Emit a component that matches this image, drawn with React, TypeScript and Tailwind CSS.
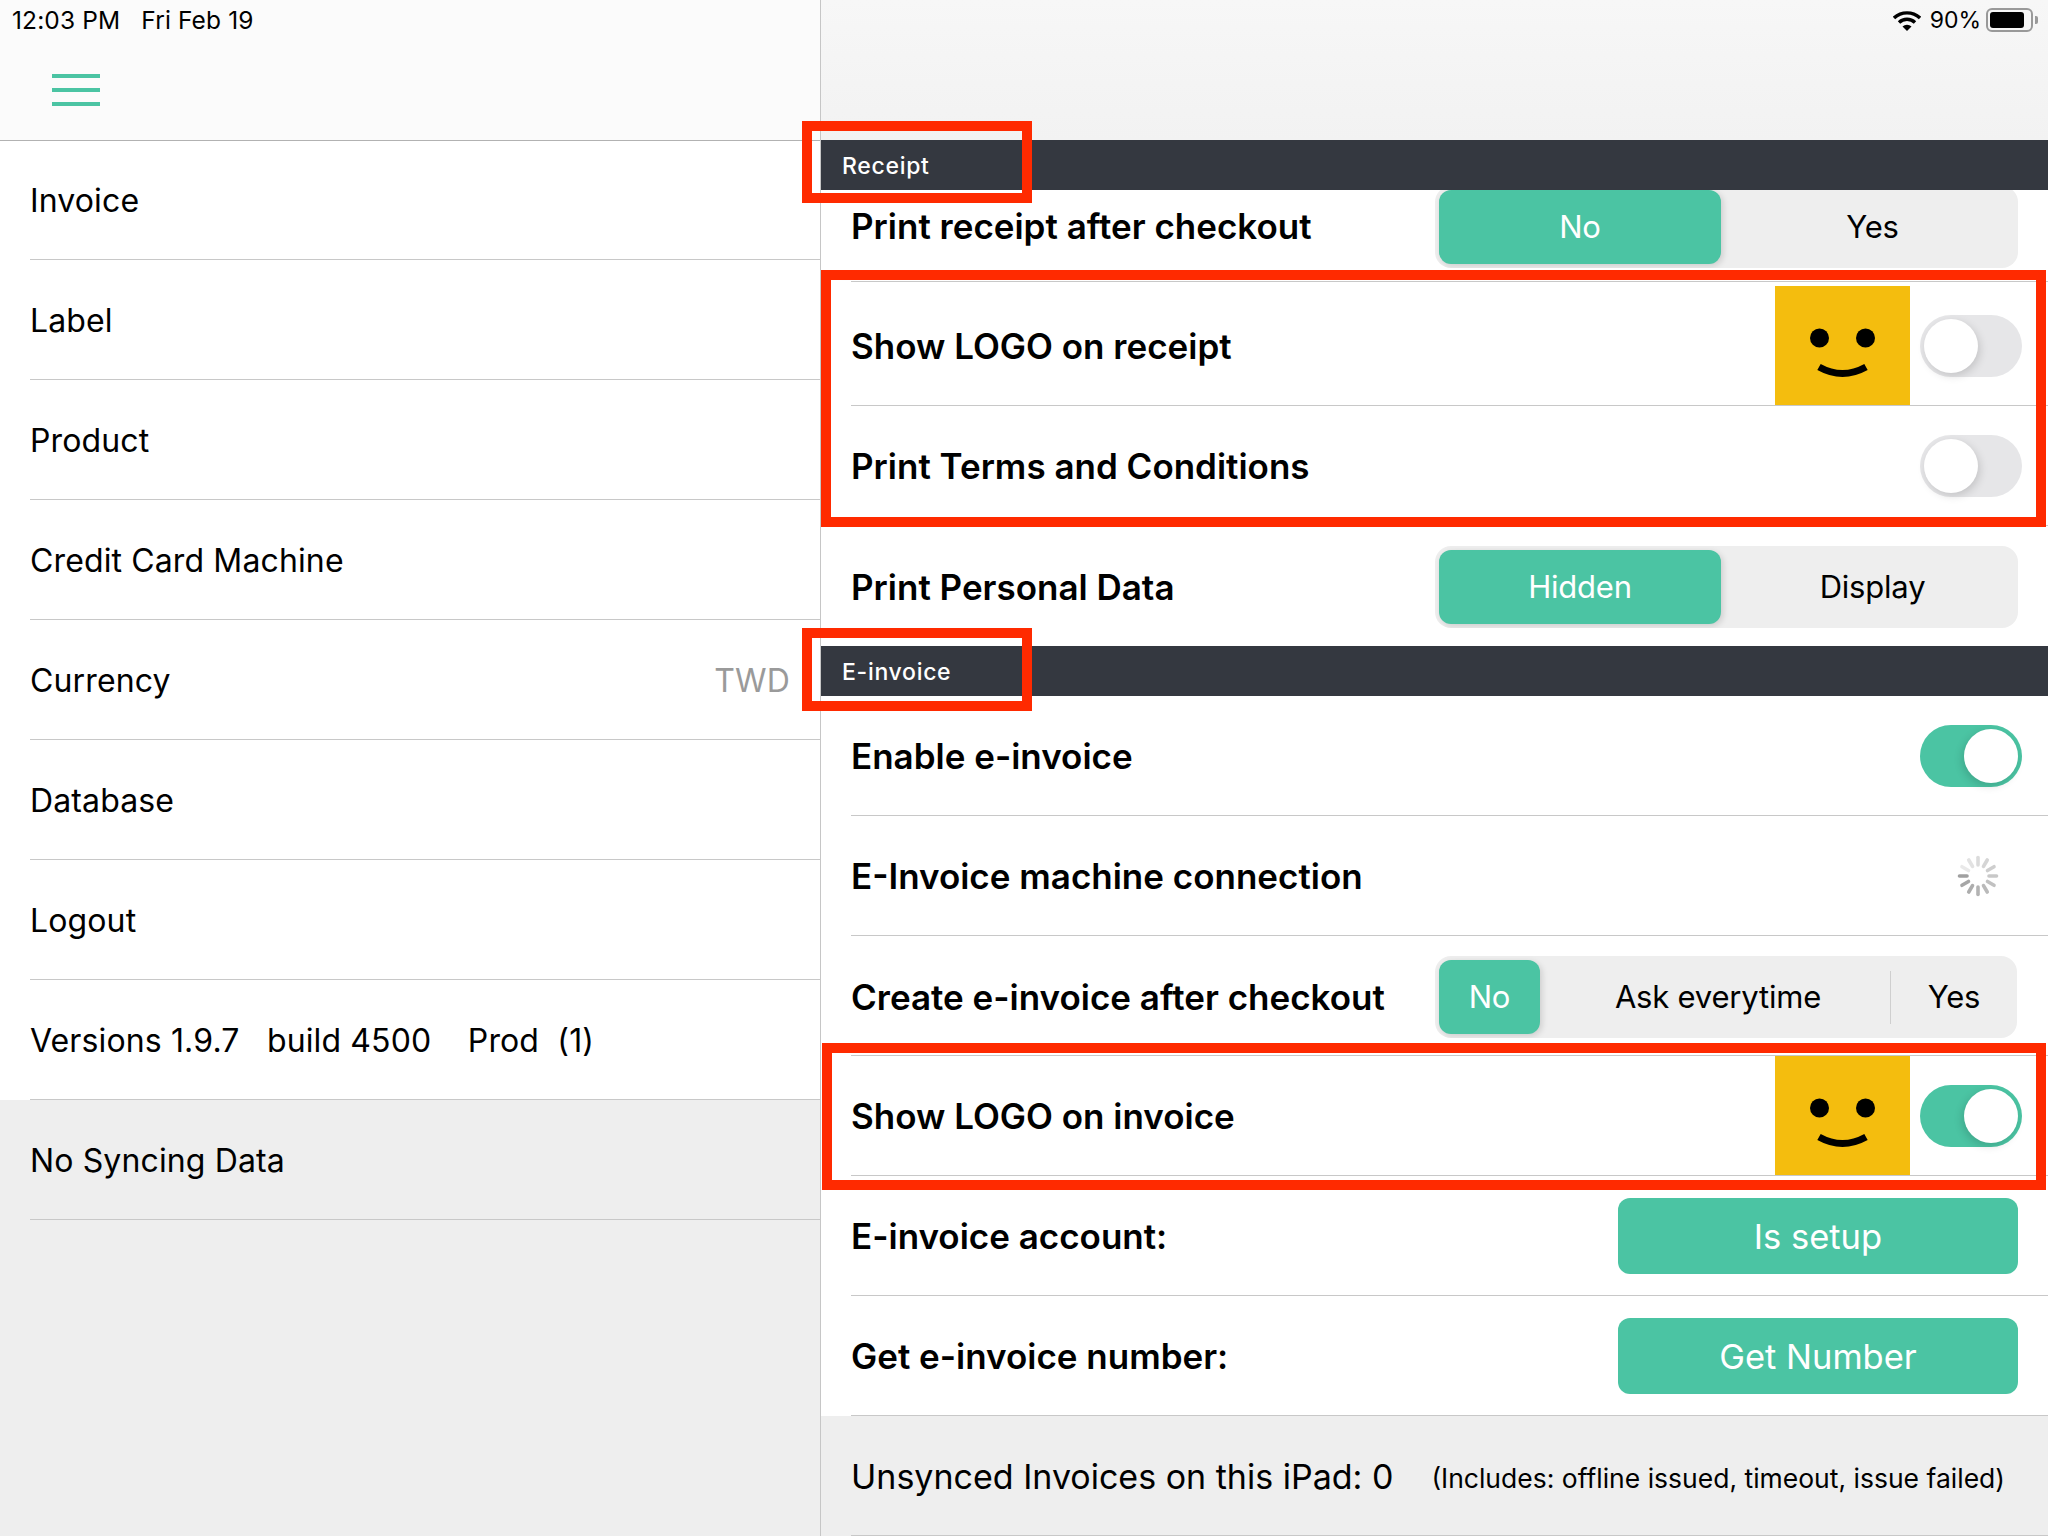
import React from 'react';

const leftRows = ['Invoice', 'Label', 'Product', 'Credit Card Machine'];
const leftRowsAfter = ['Database', 'Logout'];

const Annotation: React.FC<{ className: string }> = ({ className }) => (
  <div className={`absolute border-[10px] border-[#ff2a00] z-20 ${className}`} />
);

const Toggle: React.FC<{ on?: boolean }> = ({ on }) =>
  on ? (
    <div className="w-[102px] h-[62px] rounded-full bg-[#4bc4a3] flex items-center justify-end pr-[4px] shrink-0">
      <div className="w-[54px] h-[54px] rounded-full bg-white shadow-[-2px_3px_8px_rgba(0,0,0,0.15)]" />
    </div>
  ) : (
    <div className="w-[102px] h-[62px] rounded-full bg-[#e6e6e8] flex items-center pl-[4px] shrink-0">
      <div className="w-[54px] h-[54px] rounded-full bg-white shadow-[2px_3px_8px_rgba(0,0,0,0.15)]" />
    </div>
  );

const Logo = () => (
  <svg width="135" height="119" viewBox="0 0 135 119" className="shrink-0 self-start mr-[10px]">
    <rect width="135" height="119" fill="#f4bd0e" />
    <ellipse cx="44.5" cy="52" rx="9.5" ry="9.5" fill="#000" />
    <ellipse cx="90.5" cy="52" rx="9.5" ry="9.5" fill="#000" />
    <path d="M44 81 Q67.5 94 91 81" fill="none" stroke="#000" strokeWidth="7" />
  </svg>
);

const Spinner = () => (
  <svg width="44" height="44" viewBox="-22 -22 44 44" className="mr-[22px]">
    {Array.from({ length: 12 }).map((_, i) => (
      <line
        key={i}
        x1="0"
        y1="-11"
        x2="0"
        y2="-18.5"
        stroke="#8f8f8f"
        strokeOpacity={0.85 - (i * 0.65) / 11}
        strokeWidth="3.6"
        strokeLinecap="round"
        transform={`rotate(${270 - i * 30})`}
      />
    ))}
  </svg>
);

const Row: React.FC<{ label: string; children?: React.ReactNode }> = ({ label, children }) => (
  <div className="h-[120px] pl-[30px]">
    <div className="h-full border-b border-[#c8c8c8] flex items-center pr-[26px]">
      <span className="flex-1 pt-[1px] text-[35px] font-semibold text-black">{label}</span>
      {children}
    </div>
  </div>
);

const ActionRow: React.FC<{ label: string; action: string }> = ({ label, action }) => (
  <Row label={label}>
    <button className="w-[400px] h-[76px] mr-[4px] pt-[2px] rounded-[12px] bg-[#4bc4a3] text-white text-[34.5px]">
      {action}
    </button>
  </Row>
);

const Segmented: React.FC<{ left: string; right: string }> = ({ left, right }) => (
  <div className="w-[583px] h-[82px] rounded-[16px] bg-[#eeeeee] p-[4px] flex items-center text-[31px] tracking-[-0.2px] overflow-hidden">
    <div className="w-[282px] h-[74px] rounded-[12px] bg-[#4bc4a3] text-white flex items-center justify-center shadow-[2px_2px_6px_rgba(0,0,0,0.14)]">
      {left}
    </div>
    <div className="flex-1 pl-[10px] text-center text-black">{right}</div>
  </div>
);

const SectionHeader: React.FC<{ title: string }> = ({ title }) => (
  <div className="relative z-10 h-[50px] pt-[2px] bg-[#343840] flex items-center pl-[21px] text-white text-[23px] font-medium tracking-[0.7px]">
    {title}
  </div>
);

export default function App() {
  return (
    <div className="relative w-[2048px] h-[1536px] overflow-hidden flex bg-white text-black font-[Inter,sans-serif]">
      {/* Left menu */}
      <div className="w-[821px] h-full shrink-0 border-r border-[#c6c6c6] bg-[#eeeeee] flex flex-col tracking-[0.13px]">
        <div className="h-[141px] shrink-0 border-b border-[#b2b2b2] bg-[#fbfbfb]">
          <div className="h-[40px] pl-[12px] flex items-center text-[24.5px] gap-[21px]">
            <span>12:03 PM</span>
            <span>Fri Feb 19</span>
          </div>
          <div className="mt-[34px] ml-[52px] w-[48px] flex flex-col gap-[10px]">
            <div className="h-[4px] bg-[#4bc4a3]" />
            <div className="h-[4px] bg-[#4bc4a3]" />
            <div className="h-[4px] bg-[#4bc4a3]" />
          </div>
        </div>
        <div className="bg-white">
          <div className="h-[119px] pl-[30px]">
            <div className="h-full pt-[1px] border-b border-[#c8c8c8] flex items-center text-[32px]">Invoice</div>
          </div>
          {leftRows.slice(1).map((r) => (
            <div key={r} className="h-[120px] pl-[30px]">
              <div className="h-full pt-[3px] border-b border-[#c8c8c8] flex items-center text-[32px]">{r}</div>
            </div>
          ))}
          <div className="h-[120px] pl-[30px]">
            <div className="h-full pt-[3px] border-b border-[#c8c8c8] flex items-center justify-between pr-[30px] text-[32px]">
              <span>Currency</span>
              <span className="text-[#9a9a9a]">TWD</span>
            </div>
          </div>
          {leftRowsAfter.map((r) => (
            <div key={r} className="h-[120px] pl-[30px]">
              <div className="h-full pt-[3px] border-b border-[#c8c8c8] flex items-center text-[32px]">{r}</div>
            </div>
          ))}
          <div className="h-[120px] pl-[30px]">
            <div className="h-full pt-[3px] border-b border-[#c8c8c8] flex items-center text-[32px] whitespace-pre">
              {'Versions 1.9.7   build 4500    Prod  (1)'}
            </div>
          </div>
        </div>
        <div className="h-[120px] pl-[30px]">
          <div className="h-full pt-[3px] border-b border-[#c8c8c8] flex items-center text-[32px]">No Syncing Data</div>
        </div>
      </div>

      {/* Settings */}
      <div className="flex-1 h-full flex flex-col">
        <div className="h-[140px] shrink-0 bg-gradient-to-b from-[#f7f7f7] to-[#f2f2f2]">
          <div className="h-[40px] flex items-center justify-end pr-[10px] text-[23px]">
            <svg width="28" height="22" viewBox="0 0 28 22" className="mr-[9px]">
              <path d="M1 9 A19 19 0 0 1 27 9" fill="none" stroke="#000" strokeWidth="3.4" />
              <path d="M6 13.5 A11.5 11.5 0 0 1 22 13.5" fill="none" stroke="#000" strokeWidth="3.4" />
              <path d="M9.5 17.5 L14 22 L18.5 17.5 A6.4 6.4 0 0 0 9.5 17.5 Z" fill="#000" />
            </svg>
            <span>90%</span>
            <div className="ml-[5px] w-[47px] h-[24px] rounded-[6px] border-2 border-[#999999] p-[2px]">
              <div className="w-[34px] h-full rounded-[3px] bg-black" />
            </div>
            <div className="ml-[2px] w-[3px] h-[8px] rounded-r-[2px] bg-[#999999]" />
          </div>
        </div>

        <SectionHeader title="Receipt" />
        <div className="h-[96px] pl-[30px]">
          <div className="h-full border-b border-[#c8c8c8] pr-[30px]">
            <div className="-mt-[4px] h-[82px] flex items-center justify-between">
              <span className="-mt-[2px] text-[35px] font-semibold">Print receipt after checkout</span>
              <Segmented left="No" right="Yes" />
            </div>
          </div>
        </div>
        <Row label="Show LOGO on receipt">
          <Logo />
          <Toggle />
        </Row>
        <Row label="Print Terms and Conditions">
          <Toggle />
        </Row>
        <div className="h-[120px] pl-[30px] pr-[30px] pt-[20px]">
          <div className="h-[82px] flex items-center justify-between">
            <span className="text-[35px] font-semibold">Print Personal Data</span>
            <Segmented left="Hidden" right="Display" />
          </div>
        </div>

        <SectionHeader title="E-invoice" />
        <Row label="Enable e-invoice">
          <Toggle on />
        </Row>
        <Row label="E-Invoice machine connection">
          <Spinner />
        </Row>
        <div className="h-[120px] pl-[30px]">
          <div className="h-full border-b border-[#c8c8c8] pr-[31px] pt-[20px]">
            <div className="h-[82px] flex items-center justify-between">
              <span className="text-[35px] font-semibold">Create e-invoice after checkout</span>
              <div className="w-[582px] h-[82px] rounded-[16px] bg-[#eeeeee] p-[4px] flex items-center text-[31px] tracking-[-0.2px] overflow-hidden">
                <div className="w-[101px] h-[74px] rounded-[12px] bg-[#4bc4a3] text-white flex items-center justify-center shadow-[2px_2px_6px_rgba(0,0,0,0.14)]">
                  No
                </div>
                <div className="w-[350px] pl-[6px] text-center">Ask everytime</div>
                <div className="w-px h-[53px] bg-[#cfcfcf]" />
                <div className="flex-1 pl-[4px] text-center">Yes</div>
              </div>
            </div>
          </div>
        </div>
        <Row label="Show LOGO on invoice">
          <Logo />
          <Toggle on />
        </Row>
        <ActionRow label="E-invoice account:" action="Is setup" />
        <ActionRow label="Get e-invoice number:" action="Get Number" />
        <div className="h-[120px] bg-[#eeeeee] pl-[30px]">
          <div className="h-full border-b border-[#c8c8c8] flex items-center">
            <span className="pt-[1px] text-[34px]">Unsynced Invoices on this iPad: 0</span>
            <span className="ml-[38px] pt-[6px] text-[26.5px]">(Includes: offline issued, timeout, issue failed)</span>
          </div>
        </div>
      </div>

      {/* Red annotation boxes */}
      <Annotation className="left-[802px] top-[121px] w-[230px] h-[82px]" />
      <Annotation className="left-[821px] top-[270px] w-[1225px] h-[257px]" />
      <Annotation className="left-[802px] top-[628px] w-[230px] h-[83px]" />
      <Annotation className="left-[822px] top-[1043px] w-[1224px] h-[147px]" />
    </div>
  );
}
